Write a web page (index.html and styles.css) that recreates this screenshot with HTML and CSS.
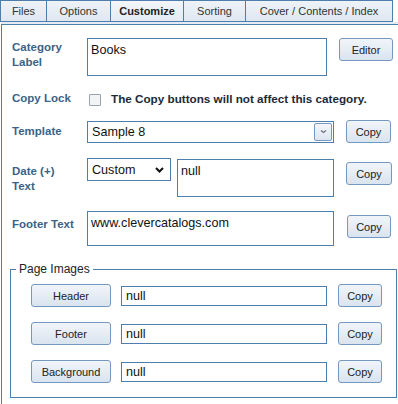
FILE: index.html
```html
<!DOCTYPE html>
<html lang="en">
<head>
    <meta charset="UTF-8">
    <title>Customize</title>
    <link rel="stylesheet" href="styles.css">
</head>
<body>
    <div class="tabs">
        <a href="#" class="tab tab-files">Files</a>
        <a href="#" class="tab tab-options">Options</a>
        <a href="#" class="tab tab-customize active">Customize</a>
        <a href="#" class="tab tab-sorting">Sorting</a>
        <a href="#" class="tab tab-cover">Cover / Contents / Index</a>
    </div>
    <div class="tab-strip"></div>

    <div class="panel">
        <div class="row row-category">
            <div class="label">Category<br>Label</div>
            <textarea class="field field-category">Books</textarea>
            <button class="btn btn-editor">Editor</button>
        </div>

        <div class="row row-lock">
            <div class="label">Copy Lock</div>
            <span class="checkbox"></span>
            <span class="lock-note">The Copy buttons will not affect this category.</span>
        </div>

        <div class="row row-template">
            <div class="label">Template</div>
            <div class="select select-template">
                <span>Sample 8</span>
                <span class="select-arrow">
                    <svg width="7" height="5" viewBox="0 0 7 5"><path d="M1 1.5 L3.5 3.5 L6 1.5" fill="none" stroke="#6a7380" stroke-width="1.3"/></svg>
                </span>
            </div>
            <button class="btn btn-copy">Copy</button>
        </div>

        <div class="row row-date">
            <div class="label label-date">Date (+)<br>Text</div>
            <div class="select select-date">
                <span>Custom</span>
                <svg width="9" height="6" viewBox="0 0 9 6"><path d="M1 1 L4.5 4.5 L8 1" fill="none" stroke="#111" stroke-width="2"/></svg>
            </div>
            <textarea class="field field-date">null</textarea>
            <button class="btn btn-copy btn-date">Copy</button>
        </div>

        <div class="row row-footer">
            <div class="label label-footer">Footer Text</div>
            <textarea class="field field-footer">www.clevercatalogs.com</textarea>
            <button class="btn btn-copy btn-footer">Copy</button>
        </div>

        <fieldset class="images">
            <legend>Page Images</legend>
            <div class="image-rows">
                <div class="image-row">
                    <button class="btn btn-image">Header</button>
                    <input type="text" class="image-input" value="null">
                    <button class="btn btn-copy btn-small">Copy</button>
                </div>
                <div class="image-row">
                    <button class="btn btn-image">Footer</button>
                    <input type="text" class="image-input" value="null">
                    <button class="btn btn-copy btn-small">Copy</button>
                </div>
                <div class="image-row">
                    <button class="btn btn-image">Background</button>
                    <input type="text" class="image-input" value="null">
                    <button class="btn btn-copy btn-small">Copy</button>
                </div>
            </div>
        </fieldset>
    </div>
</body>
</html>
```
FILE: styles.css
```css
* {
    margin: 0;
    padding: 0;
    box-sizing: border-box;
}

body {
    width: 398px;
    height: 404px;
    overflow: hidden;
    background: #fff;
    color: #222;
    font-family: 'Liberation Sans', Arial, sans-serif;
}

/* tabs */
.tabs {
    display: flex;
    height: 22px;
}

.tab {
    height: 22px;
    border: 1px solid #4d7eac;
    border-left: none;
    background: linear-gradient(#eef3f9, #dfe7f1);
    color: #333;
    font-size: 11px;
    text-decoration: none;
    display: flex;
    align-items: center;
    justify-content: center;
}

.tab-files {
    width: 47px;
    border-left: 1px solid #4d7eac;
}

.tab-options { width: 64px; }
.tab-customize { width: 73px; }
.tab-sorting { width: 62px; }
.tab-cover { width: 147px; }

.tab.active {
    font-weight: bold;
    color: #222;
    background: linear-gradient(#f3f6fa, #e4ebf4);
}

.tab-strip {
    height: 2px;
    margin-left: 1px;
    background: #e4ebf4;
}

/* panel */
.panel {
    height: 380px;
    margin-left: 1px;
    border-left: 1px solid #4d7eac;
    border-top: 1px solid #4d7eac;
    padding: 13px 0 0 8px;
}

.row {
    display: flex;
    align-items: flex-start;
    padding-left: 2px;
}

.label {
    width: 75px;
    flex-shrink: 0;
    font-size: 11.5px;
    font-weight: bold;
    line-height: 15px;
    color: #3b6389;
}

.field {
    border: 1px solid #4d7eac;
    background: #fff;
    color: #111;
    font-family: 'Liberation Sans', Arial, sans-serif;
    font-size: 12.6px;
    padding: 4px 3px;
    resize: none;
    overflow: hidden;
    outline: none;
}

.btn {
    height: 23px;
    border: 1px solid #7498bf;
    border-radius: 3px;
    background: linear-gradient(#f1f5fa, #d9e4f0);
    color: #222;
    font-family: 'Liberation Sans', Arial, sans-serif;
    font-size: 11px;
    cursor: pointer;
}

.btn-copy {
    width: 45px;
    margin-left: 12px;
}

/* category */
.row-category .label {
    margin-top: 2px;
}

.field-category {
    width: 240px;
    height: 38px;
}

.btn-editor {
    width: 54px;
    margin-left: 12px;
}

/* copy lock */
.row-lock {
    margin-top: 15px;
    align-items: center;
    height: 15px;
}

.checkbox {
    width: 12px;
    height: 12px;
    margin: 3px 10px 0 2px;
    border: 1px solid #9aa3ad;
    border-radius: 1px;
    background: #f3f4f6;
}

.lock-note {
    font-size: 11.7px;
    font-weight: bold;
    color: #1c2a38;
}

/* template */
.row-template {
    margin-top: 14px;
    align-items: center;
}

.select {
    border: 1px solid #4d7eac;
    background: #fff;
    color: #111;
    font-size: 12.6px;
    display: flex;
    align-items: center;
    justify-content: space-between;
}

.select-template {
    width: 247px;
    height: 22px;
    padding: 0 1px 0 4px;
}

.select-arrow {
    width: 18px;
    height: 18px;
    border: 1px solid #7498bf;
    border-radius: 2px;
    background: linear-gradient(#f4f7fb, #dde6f1);
    display: flex;
    align-items: center;
    justify-content: center;
}

/* date */
.row-date {
    margin-top: 15px;
}

.label-date {
    margin-top: 6px;
}

.select-date {
    width: 84px;
    height: 23px;
    padding: 0 6px 0 4px;
}

.field-date {
    width: 157px;
    height: 38px;
    margin: 1px 0 0 6px;
}

.btn-date {
    width: 46px;
    margin-top: 4px;
}

/* footer */
.row-footer {
    margin-top: 14px;
}

.label-footer {
    margin-top: 6px;
}

.field-footer {
    width: 247px;
    height: 35px;
}

.btn-footer {
    width: 44px;
    margin: 4px 0 0 13px;
}

/* page images */
.images {
    width: 387px;
    margin-top: 16px;
    border: 1px solid #4d7eac;
    padding: 0 0 14px;
}

.images legend {
    margin-left: 5px;
    padding: 0 3px;
    font-size: 12px;
    color: #222;
}

.image-rows {
    display: flex;
    flex-direction: column;
    gap: 15px;
    padding: 8px 0 0 20px;
}

.image-row {
    display: flex;
    align-items: center;
}

.btn-image {
    width: 80px;
}

.image-input {
    width: 206px;
    height: 20px;
    margin-left: 10px;
    border: 1px solid #4d7eac;
    padding: 0 4px;
    font-family: 'Liberation Sans', Arial, sans-serif;
    font-size: 12.6px;
    color: #111;
    outline: none;
}

.btn-small {
    width: 44px;
    margin-left: 11px;
}
```
